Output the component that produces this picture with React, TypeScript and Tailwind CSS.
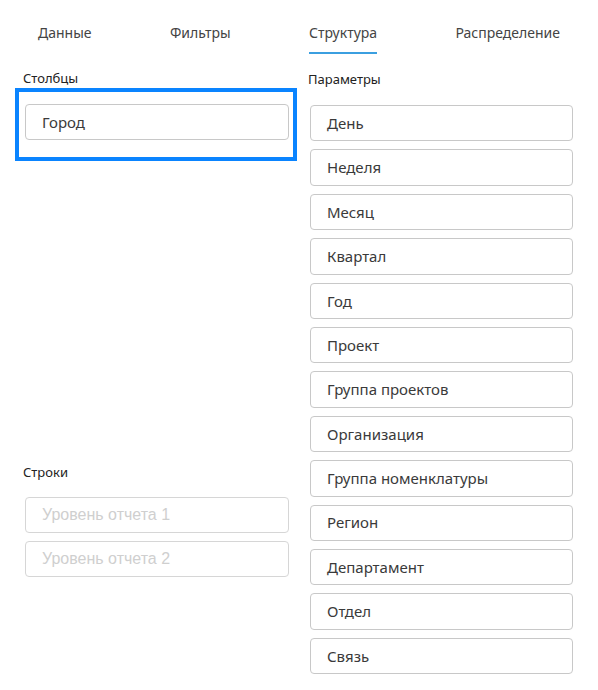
import React from "react";

const tabs = ["Данные", "Фильтры", "Структура", "Распределение"];
const params = [
  "День",
  "Неделя",
  "Месяц",
  "Квартал",
  "Год",
  "Проект",
  "Группа проектов",
  "Организация",
  "Группа номенклатуры",
  "Регион",
  "Департамент",
  "Отдел",
  "Связь",
];

const font = { fontFamily: "'Noto Sans', Roboto, sans-serif" };

export default function App() {
  return (
    <div className="w-[598px] h-[690px] bg-white overflow-hidden text-[#333]" style={font}>
      <div className="flex justify-between px-[38px] pt-[24px]">
        {tabs.map((t) => (
          <div
            key={t}
            className={
              "text-[14px] leading-[18px] pb-[10px] border-b-2 " +
              (t === "Структура" ? "border-[#3b9fe0] text-[#444]" : "border-transparent text-[#444]")
            }
          >
            {t}
          </div>
        ))}
      </div>
      <div className="flex">
        <div className="w-[282px] ml-[15px]">
          <div className="ml-[8px] mt-[16px] text-[13px] leading-[16px] text-[#222]">Столбцы</div>
          <div className="mt-[2px] border-4 border-[#0a84ff] pt-[12px] pb-[17px] pl-[6px] pr-[4px]">
            <div className="h-[36px] flex items-center pl-[16px] border border-[#c8c8c8] rounded-[4px] text-[15px] text-[#3a3a3a]">
              Город
            </div>
          </div>
          <div className="ml-[8px] mt-[303px] text-[13px] leading-[16px] text-[#222]">Строки</div>
          <div className="mt-[17px] ml-[10px] w-[264px] flex flex-col gap-2">
            {["Уровень отчета 1", "Уровень отчета 2"].map((p) => (
              <div
                key={p}
                className="h-[36px] flex items-center pl-[16px] border border-[#d6d6d6] rounded-[4px] text-[16px] text-[#cfcfcf]"
                style={{ fontFamily: "'Liberation Sans', Arial, sans-serif" }}
              >
                {p}
              </div>
            ))}
          </div>
        </div>
        <div className="w-[265px] ml-[11px]">
          <div className="mt-[17px] text-[13px] leading-[16px] text-[#222]">Параметры</div>
          <div className="mt-[18px] ml-[2px] w-[263px] flex flex-col gap-2">
            {params.map((p) => (
              <div
                key={p}
                className="h-[36.4px] flex items-center pl-[16px] border border-[#c8c8c8] rounded-[4px] text-[15px] text-[#3a3a3a]"
              >
                {p}
              </div>
            ))}
          </div>
        </div>
      </div>
    </div>
  );
}
